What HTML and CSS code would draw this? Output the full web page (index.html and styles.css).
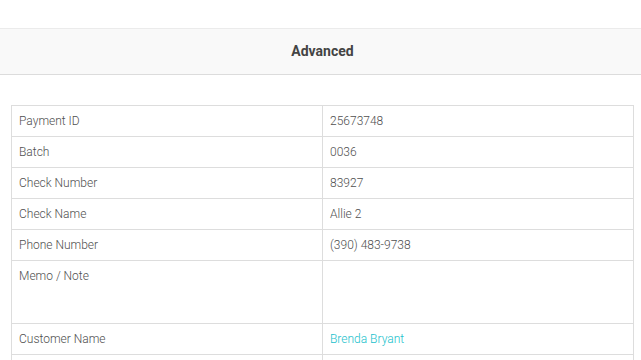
FILE: index.html
```html
<!DOCTYPE html>
<html lang="en">
<head>
<meta charset="utf-8">
<title>Payment – Advanced</title>
<link rel="stylesheet" href="styles.css">
</head>
<body>
  <div class="page">
    <div class="section-head">Advanced</div>
    <table class="details">
      <tbody>
        <tr><td>Payment ID</td><td>25673748</td></tr>
        <tr><td>Batch</td><td>0036</td></tr>
        <tr><td>Check Number</td><td>83927</td></tr>
        <tr><td>Check Name</td><td>Allie 2</td></tr>
        <tr><td>Phone Number</td><td>(390) 483-9738</td></tr>
        <tr class="tall"><td>Memo / Note</td><td></td></tr>
        <tr><td>Customer Name</td><td><a class="link" href="#">Brenda Bryant</a></td></tr>
        <tr><td></td><td></td></tr>
      </tbody>
    </table>
  </div>
</body>
</html>
```

FILE: styles.css
```css
html, body {
  margin: 0;
  padding: 0;
  background: #ffffff;
}

body {
  font-family: Roboto, "Liberation Sans", Arial, sans-serif;
  font-size: 12px;
  font-weight: 300;
  color: #4f4f4f;
  overflow: hidden;
}

.page {
  padding-top: 28px;
}

.section-head {
  height: 45px;
  line-height: 45px;
  padding-left: 4px;
  background: #f9f9f9;
  border-top: 1px solid #ebebeb;
  border-bottom: 1px solid #dcdcdc;
  text-align: center;
  font-size: 14px;
  font-weight: 700;
  color: #444444;
}

.details {
  margin: 30px 0 0 11px;
  width: 623px;
  border-collapse: collapse;
  table-layout: fixed;
}

.details td {
  border: 1px solid #dddddd;
  padding: 8px 8px 8px 7px;
  height: 14px;
  line-height: 14px;
  vertical-align: top;
}

.details tr.tall td {
  height: 46px;
}

.link {
  color: #22bfcc;
  text-decoration: none;
}
```
